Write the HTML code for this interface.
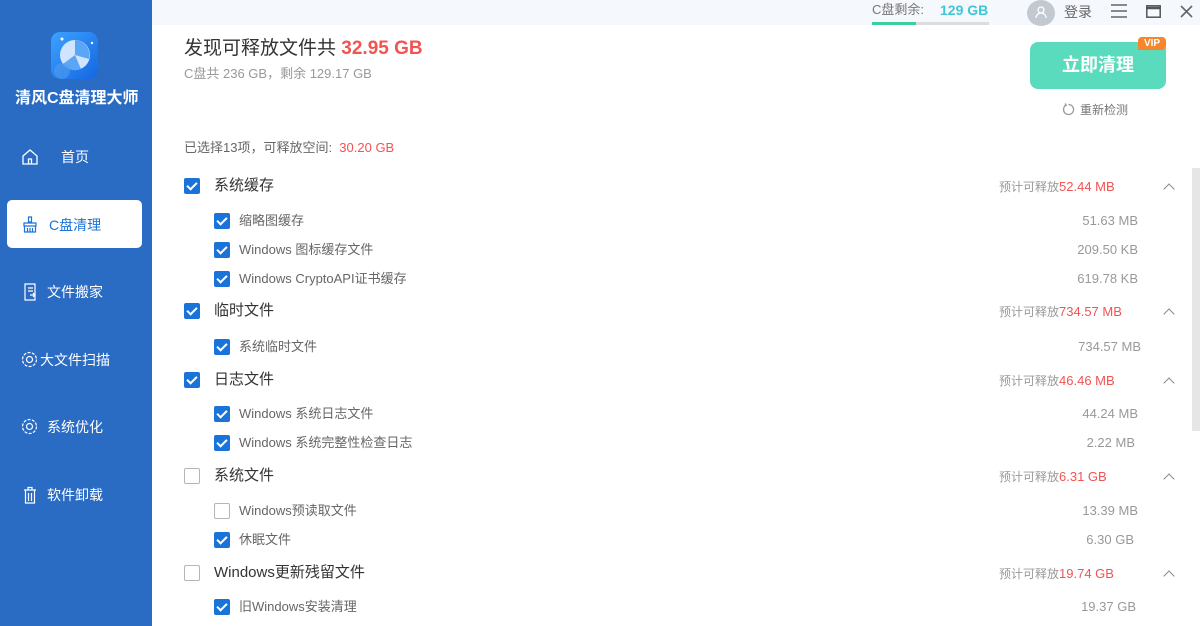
<!DOCTYPE html>
<html><head><meta charset="utf-8"><style>
*{margin:0;padding:0;box-sizing:border-box}
body{width:1200px;height:626px;overflow:hidden;background:#fff;font-family:"Liberation Sans","Noto Sans CJK SC",sans-serif;position:relative}
.a{position:absolute;white-space:nowrap;line-height:20px}
#side{position:absolute;left:0;top:0;width:152px;height:626px;background:#2a6bc4}
.nav{position:absolute;left:0;width:152px;height:20px;color:#fff;font-size:14px;line-height:20px}
.cb{position:absolute;width:16px;height:16px;border-radius:2px;background:#1a73d9}
.cb::after{content:"";position:absolute;left:5px;top:2px;width:4px;height:8px;border:solid #fff;border-width:0 2px 2px 0;transform:rotate(45deg)}
.cb.off{background:#fff;border:1px solid #b5b5b5}
.cb.off::after{display:none}
.g{font-size:15px;color:#333}
.i{font-size:13px;color:#666}
.est{font-size:12px;color:#999}
.est b{font-weight:normal;color:#f25353;font-size:13px}
.sz{font-size:13px;color:#999;text-align:right;width:100px}
.chev{position:absolute;width:8px;height:8px;border-left:1.5px solid #7a8a99;border-top:1.5px solid #7a8a99;transform:rotate(45deg)}
</style></head><body>
<div id="side">
 <svg class="a" style="left:51px;top:32px" width="47" height="47" viewBox="0 0 47 47"><defs><linearGradient id="lg" x1="0" y1="0" x2="1" y2="1"><stop offset="0" stop-color="#3da2ff"/><stop offset="1" stop-color="#1466e0"/></linearGradient></defs><rect width="47" height="47" rx="9" fill="url(#lg)"/><circle cx="24" cy="23" r="15" fill="#cfe4ff"/><path d="M24 23 L24 8 A15 15 0 0 1 38 27Z M24 23 L12 32 A15 15 0 0 0 30 37Z" fill="#5aa5f5"/><circle cx="11" cy="39" r="8" fill="#5aa0f0" opacity=".5"/><circle cx="11" cy="7" r="1.5" fill="#fff"/><circle cx="41" cy="11" r="1.2" fill="#fff"/></svg>
 <div class="a" style="left:15px;top:89px;color:#fff;font-size:16px;font-weight:bold">清风C盘清理大师</div>
 <div class="nav" style="top:147px"><svg class="a" style="left:21px;top:1px" width="18" height="18" viewBox="0 0 18 18" fill="none" stroke="#fff" stroke-width="1.3"><path d="M2 8 L9 2 L16 8 V16 H2Z M7.5 16 V11 H10.5 V16"/></svg><span class="a" style="left:61px;top:0">首页</span></div>
 <div class="a" style="left:7px;top:200px;width:135px;height:48px;background:#fff;border-radius:5px"></div>
 <div class="nav" style="top:215px;color:#1a73d9"><svg class="a" style="left:22px;top:1px" width="16" height="17" viewBox="0 0 16 17" fill="none" stroke="#1a73d9" stroke-width="1.2"><path d="M6.5 1h3v5h-3z M2 7h12v3H2z M2.5 10v6h11v-6 M5.5 12v4 M8 12v4 M10.5 12v4"/></svg><span class="a" style="left:49px;top:0">C盘清理</span></div>
 <div class="nav" style="top:282px"><svg class="a" style="left:23px;top:1px" width="15" height="18" viewBox="0 0 15 18" fill="none" stroke="#fff" stroke-width="1.2"><path d="M2 1h10v16H2z M5 5h5 M5 8h5 M7 12h5 M10 10l2 2-2 2"/></svg><span class="a" style="left:47px;top:0">文件搬家</span></div>
 <div class="nav" style="top:350px"><svg class="a" style="left:21px;top:1px" width="17" height="17" viewBox="0 0 17 17" fill="none" stroke="#fff" stroke-width="1.2"><circle cx="8.5" cy="8.5" r="3"/><circle cx="8.5" cy="8.5" r="7" stroke-dasharray="3 1.4"/></svg><span class="a" style="left:40px;top:0">大文件扫描</span></div>
 <div class="nav" style="top:417px"><svg class="a" style="left:21px;top:1px" width="17" height="17" viewBox="0 0 17 17" fill="none" stroke="#fff" stroke-width="1.2"><circle cx="8.5" cy="8.5" r="3"/><circle cx="8.5" cy="8.5" r="7" stroke-dasharray="3 1.4"/></svg><span class="a" style="left:47px;top:0">系统优化</span></div>
 <div class="nav" style="top:485px"><svg class="a" style="left:23px;top:1px" width="14" height="18" viewBox="0 0 14 18" fill="none" stroke="#fff" stroke-width="1.2"><path d="M1 4h12 M5 4V1.5h4V4 M2.5 4v13h9V4 M5.5 7v8 M8.5 7v8"/></svg><span class="a" style="left:47px;top:0">软件卸载</span></div>
</div>
<div class="a" style="left:152px;top:0;width:1048px;height:25px;background:#f5f8fc"></div>
<div class="a" style="left:872px;top:0;font-size:13px;color:#777">C盘剩余:</div>
<div class="a" style="left:940px;top:0;font-size:14px;color:#3ec8d6;font-weight:bold">129 GB</div>
<div class="a" style="left:872px;top:22px;width:117px;height:3px;background:#ddd"><div style="width:44px;height:3px;background:#3ccf9d"></div></div>
<div class="a" style="left:1027px;top:0;width:28px;height:26px;border-radius:50%;background:#c3c9d0"></div>
<svg class="a" style="left:1034px;top:5px" width="14" height="14" viewBox="0 0 14 14" fill="none" stroke="#fff" stroke-width="1.3"><circle cx="7" cy="5" r="3"/><path d="M2 13a5 5 0 0 1 10 0"/></svg>
<div class="a" style="left:1064px;top:2px;font-size:14px;color:#666">登录</div>
<svg class="a" style="left:1111px;top:4px" width="16" height="14"><path d="M0 1h16M0 7h16M0 13h16" stroke="#666" stroke-width="1.6"/></svg>
<svg class="a" style="left:1146px;top:5px" width="15" height="13"><rect x=".8" y=".8" width="13.4" height="11.4" fill="none" stroke="#555" stroke-width="1.5"/><path d="M0 3h15" stroke="#555" stroke-width="2.5"/></svg>
<svg class="a" style="left:1180px;top:5px" width="13" height="13"><path d="M1 1l11 11M12 1L1 12" stroke="#666" stroke-width="1.6"/></svg>

<div class="a" style="left:184px;top:37px;font-size:19px;line-height:24px;color:#333">发现可释放文件共 <b style="color:#f25353">32.95 GB</b></div>
<div class="a" style="left:184px;top:64px;font-size:13px;color:#999">C盘共 236 GB，剩余 129.17 GB</div>
<div class="a" style="left:1030px;top:42px;width:136px;height:47px;border-radius:8px;background:#5bdbbd;color:#fff;font-size:18px;font-weight:bold;text-align:center;line-height:47px">立即清理</div>
<div class="a" style="left:1138px;top:37px;width:28px;height:13px;border-radius:4px 4px 4px 0;background:#f5862c;color:#fff;font-size:10px;font-weight:bold;text-align:center;line-height:13px">VIP</div>
<svg class="a" style="left:1062px;top:103px" width="13" height="13" viewBox="0 0 13 13" fill="none" stroke="#999" stroke-width="1.3"><path d="M4 2.2A5 5 0 1 0 6.5 1.5 M3 0.5l1.2 1.8-2 .8"/></svg>
<div class="a" style="left:1080px;top:100px;font-size:12px;color:#777">重新检测</div>
<div class="a" style="left:184px;top:138px;font-size:13px;color:#666">已选择13项，可释放空间:  <span style="color:#f25353">&nbsp;30.20 GB</span></div>
<div class="a" style="left:1192px;top:168px;width:8px;height:263px;background:#e6e6e6"></div>

<div class="cb" style="left:184px;top:178px"></div><div class="a g" style="left:214px;top:176px">系统缓存</div>
<div class="a est" style="left:999px;top:177px">预计可释放<b>52.44 MB</b></div><div class="chev" style="left:1165px;top:185px"></div>
<div class="cb" style="left:214px;top:213px"></div><div class="a i" style="left:239px;top:211px">缩略图缓存</div><div class="a sz" style="left:1038px;top:211px">51.63 MB</div>
<div class="cb" style="left:214px;top:242px"></div><div class="a i" style="left:239px;top:240px">Windows 图标缓存文件</div><div class="a sz" style="left:1038px;top:240px">209.50 KB</div>
<div class="cb" style="left:214px;top:271px"></div><div class="a i" style="left:239px;top:269px">Windows CryptoAPI证书缓存</div><div class="a sz" style="left:1038px;top:269px">619.78 KB</div>

<div class="cb" style="left:184px;top:303px"></div><div class="a g" style="left:214px;top:301px">临时文件</div>
<div class="a est" style="left:999px;top:302px">预计可释放<b>734.57 MB</b></div><div class="chev" style="left:1165px;top:310px"></div>
<div class="cb" style="left:214px;top:339px"></div><div class="a i" style="left:239px;top:337px">系统临时文件</div><div class="a sz" style="left:1041px;top:337px">734.57 MB</div>

<div class="cb" style="left:184px;top:372px"></div><div class="a g" style="left:214px;top:370px">日志文件</div>
<div class="a est" style="left:999px;top:371px">预计可释放<b>46.46 MB</b></div><div class="chev" style="left:1165px;top:379px"></div>
<div class="cb" style="left:214px;top:406px"></div><div class="a i" style="left:239px;top:404px">Windows 系统日志文件</div><div class="a sz" style="left:1038px;top:404px">44.24 MB</div>
<div class="cb" style="left:214px;top:435px"></div><div class="a i" style="left:239px;top:433px">Windows 系统完整性检查日志</div><div class="a sz" style="left:1035px;top:433px">2.22 MB</div>

<div class="cb off" style="left:184px;top:468px"></div><div class="a g" style="left:214px;top:466px">系统文件</div>
<div class="a est" style="left:999px;top:467px">预计可释放<b>6.31 GB</b></div><div class="chev" style="left:1165px;top:475px"></div>
<div class="cb off" style="left:214px;top:503px"></div><div class="a i" style="left:239px;top:501px">Windows预读取文件</div><div class="a sz" style="left:1038px;top:501px">13.39 MB</div>
<div class="cb" style="left:214px;top:532px"></div><div class="a i" style="left:239px;top:530px">休眠文件</div><div class="a sz" style="left:1034px;top:530px">6.30 GB</div>

<div class="cb off" style="left:184px;top:565px"></div><div class="a g" style="left:214px;top:563px">Windows更新残留文件</div>
<div class="a est" style="left:999px;top:564px">预计可释放<b>19.74 GB</b></div><div class="chev" style="left:1165px;top:572px"></div>
<div class="cb" style="left:214px;top:599px"></div><div class="a i" style="left:239px;top:597px">旧Windows安装清理</div><div class="a sz" style="left:1036px;top:597px">19.37 GB</div>
</body></html>
